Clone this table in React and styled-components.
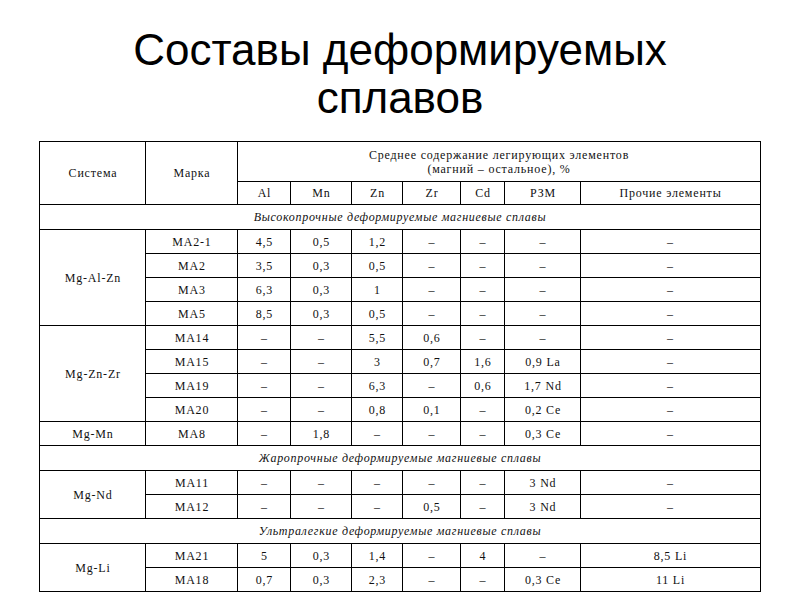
import React from "react";
import styled, { createGlobalStyle } from "styled-components";

const Global = createGlobalStyle`
  html, body { margin: 0; padding: 0; background: #fff; }
  body { width: 800px; height: 600px; overflow: hidden; }
`;

const Page = styled.div`
  width: 800px;
  height: 600px;
  display: flex;
  flex-direction: column;
  align-items: center;
  padding-top: 26px;
  box-sizing: border-box;
`;

const Title = styled.h1`
  margin: 0 0 19px 0;
  font-family: "Liberation Sans", Arial, sans-serif;
  font-weight: 400;
  font-size: 44px;
  line-height: 48px;
  color: #000;
  text-align: center;
`;

const Table = styled.table`
  border-collapse: collapse;
  table-layout: fixed;
  width: 721px;
  font-family: "Liberation Serif", "Times New Roman", serif;
  font-size: 12px;
  letter-spacing: 0.8px;
  color: #111;
`;

const Cell = styled.td`
  border: 1px solid #000;
  padding: 0;
  text-align: center;
  vertical-align: middle;
  height: ${(p) => p.$h || 23}px;
  line-height: 14px;
  white-space: nowrap;
`;

const HeadCell = styled(Cell).attrs({ as: "th" })`
  font-weight: 400;
`;

const SectionCell = styled(Cell)`
  font-style: italic;
  letter-spacing: 0.7px;
`;

const widths = [106, 92, 53, 61, 51, 58, 44, 76, 179];

const D = "–";

const data = [
  { section: "Высокопрочные деформируемые магниевые сплавы" },
  {
    system: "Mg-Al-Zn",
    rows: [
      ["МА2-1", "4,5", "0,5", "1,2", D, D, D, D],
      ["МА2", "3,5", "0,3", "0,5", D, D, D, D],
      ["МА3", "6,3", "0,3", "1", D, D, D, D],
      ["МА5", "8,5", "0,3", "0,5", D, D, D, D],
    ],
  },
  {
    system: "Mg-Zn-Zr",
    rows: [
      ["МА14", D, D, "5,5", "0,6", D, D, D],
      ["МА15", D, D, "3", "0,7", "1,6", "0,9 La", D],
      ["МА19", D, D, "6,3", D, "0,6", "1,7 Nd", D],
      ["МА20", D, D, "0,8", "0,1", D, "0,2 Ce", D],
    ],
  },
  {
    system: "Mg-Mn",
    rows: [["МА8", D, "1,8", D, D, D, "0,3 Ce", D]],
  },
  { section: "Жаропрочные деформируемые магниевые сплавы" },
  {
    system: "Mg-Nd",
    rows: [
      ["МА11", D, D, D, D, D, "3 Nd", D],
      ["МА12", D, D, D, "0,5", D, "3 Nd", D],
    ],
  },
  { section: "Ультралегкие деформируемые магниевые сплавы" },
  {
    system: "Mg-Li",
    rows: [
      ["МА21", "5", "0,3", "1,4", D, "4", D, "8,5 Li"],
      ["МА18", "0,7", "0,3", "2,3", D, D, "0,3 Ce", "11 Li"],
    ],
  },
];

export default function App() {
  const body = [];
  data.forEach((g, gi) => {
    if (g.section) {
      body.push(
        <tr key={"s" + gi}>
          <SectionCell colSpan={9} $h={24}>
            {g.section}
          </SectionCell>
        </tr>
      );
    } else {
      g.rows.forEach((r, ri) => {
        body.push(
          <tr key={gi + "-" + ri}>
            {ri === 0 && <Cell rowSpan={g.rows.length}>{g.system}</Cell>}
            {r.map((v, ci) => (
              <Cell key={ci}>{v}</Cell>
            ))}
          </tr>
        );
      });
    }
  });

  return (
    <>
      <Global />
      <Page>
        <Title>
          Составы деформируемых
          <br />
          сплавов
        </Title>
        <Table>
          <colgroup>
            {widths.map((w, i) => (
              <col key={i} style={{ width: w }} />
            ))}
          </colgroup>
          <thead>
            <tr>
              <HeadCell rowSpan={2}>Система</HeadCell>
              <HeadCell rowSpan={2}>Марка</HeadCell>
              <HeadCell colSpan={7} $h={39}>
                Среднее содержание легирующих элементов
                <br />
                (магний – остальное), %
              </HeadCell>
            </tr>
            <tr>
              {["Al", "Mn", "Zn", "Zr", "Cd", "РЗМ", "Прочие элементы"].map((h) => (
                <HeadCell key={h} $h={22}>
                  {h}
                </HeadCell>
              ))}
            </tr>
          </thead>
          <tbody>{body}</tbody>
        </Table>
      </Page>
    </>
  );
}
